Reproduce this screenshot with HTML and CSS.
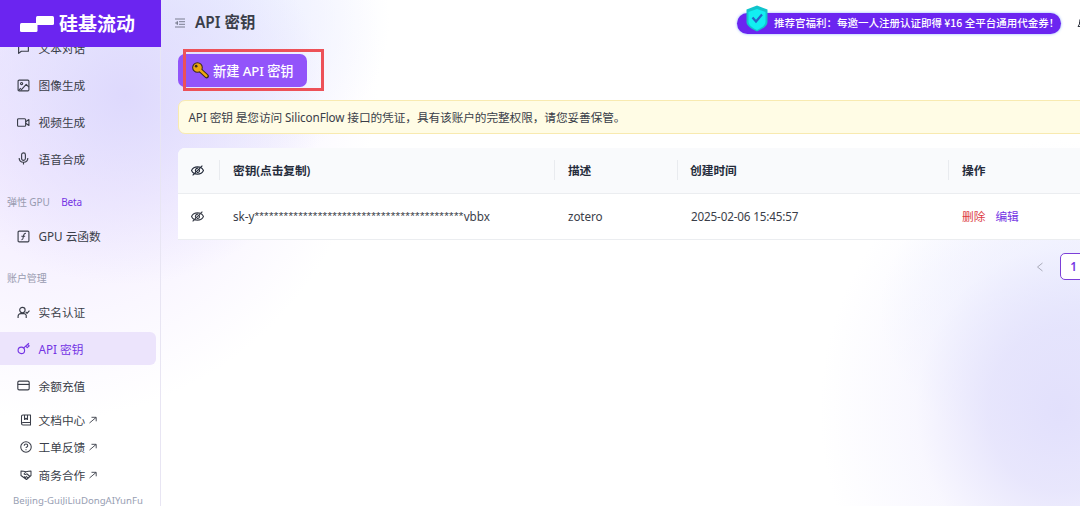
FILE: index.html
```html
<!doctype html>
<html lang="zh-CN">
<head>
  <meta charset="utf-8">
  <title>API 密钥</title>
  <link rel="stylesheet" href="styles.css">
</head>
<body>
  <div class="sidebar">
    <div class="logo">
      <svg width="35" height="18" viewBox="0 0 35 18" fill="#fff">
        <rect x="0" y="8" width="17.500" height="9" rx="1.500"/>
        <rect x="16" y="1" width="18" height="9" rx="1.500"/>
      </svg>
      <span>硅基流动</span>
    </div>
    <div class="nav">
      <a class="item">
        <svg class="icon" viewBox="0 0 24 24"><path d="M3 3h18v14H8l-5 4z"/></svg>
        文本对话
      </a>
      <a class="item">
        <svg class="icon" viewBox="0 0 24 24"><rect x="2" y="2" width="20" height="20" rx="2"/><circle cx="8.5" cy="8.5" r="2"/><path d="M22 15l-5-5L7 21M7 17l-4 4"/></svg>
        图像生成
      </a>
      <a class="item">
        <svg class="icon" viewBox="0 0 24 24"><rect x="1" y="5" width="15" height="14" rx="2"/><path d="M16 10.500l6-4v11l-6-4"/></svg>
        视频生成
      </a>
      <a class="item">
        <svg class="icon" viewBox="0 0 24 24"><rect x="8.5" y="1.5" width="7" height="14" rx="3.5"/><path d="M4 11c0 10.500 16 10.500 16 0M12 19v4"/></svg>
        语音合成
      </a>
      <div class="group">弹性 GPU <span class="beta">Beta</span></div>
      <a class="item">
        <svg class="icon" viewBox="0 0 24 24"><rect x="2" y="2" width="20" height="20" rx="2"/><path d="M8 18c3 0 3-1 3.500-5s1-7 5-7M8 11.500h7"/></svg>
        GPU 云函数
      </a>
      <div class="group account">账户管理</div>
      <a class="item">
        <svg class="icon" viewBox="0 0 24 24"><circle cx="10" cy="7.500" r="5"/><path d="M2 22v-3c0-3 2-5 5-5h6c2 0 3 1 4 3v5M16 11l2.500 2.500L23 8.500"/></svg>
        实名认证
      </a>
      <a class="item active">
        <svg class="icon" viewBox="0 0 24 24"><circle cx="8" cy="15.500" r="6"/><path d="M12.500 11L22 2M16 7.500l3 3 3.500-3.500-3-3"/></svg>
        API 密钥
      </a>
      <a class="item">
        <svg class="icon" viewBox="0 0 24 24"><rect x="1.500" y="4" width="21" height="16" rx="2.500"/><path d="M1.500 10h21"/></svg>
        余额充值
      </a>
    </div>
    <div class="links">
      <a class="link">
        <svg class="icon" viewBox="0 0 24 24"><path d="M21 17V2H6C4 2 3 3 3 5v14c0 2 1 3 3 3h15v-5H6c-2 0-3 1-3 2.500M9 2v9l3-2.500 3 2.500V2"/></svg>
        文档中心
        <svg class="arrow" viewBox="0 0 8 8"><path d="M0.500 7L7 1.500M2.500 1.300h4.700v4"/></svg>
      </a>
      <a class="link">
        <svg class="icon" viewBox="0 0 24 24"><circle cx="12" cy="12" r="10.500"/><path d="M8.500 9.500c0-4.500 7-4.500 7 0 0 2.500-3.500 2.500-3.500 4.500M12 16.500v2"/></svg>
        工单反馈
        <svg class="arrow" viewBox="0 0 8 8"><path d="M0.500 7L7 1.500M2.500 1.300h4.700v4"/></svg>
      </a>
      <a class="link">
        <svg class="icon" viewBox="0 0 24 24"><path d="M2 4l5 .5 5 1 5-1L22 4v9l-9 8-11-8zM12 5.500L8 10c2 2 4 1 5.500-.500L20 15M12 14l4 4M8.500 15l4 3.500"/></svg>
        商务合作
        <svg class="arrow" viewBox="0 0 8 8"><path d="M0.500 7L7 1.500M2.500 1.300h4.700v4"/></svg>
      </a>
    </div>
    <div class="user">Beijing-GuiJiLiuDongAIYunFu</div>
  </div>

  <div class="main">
    <div class="topbar">
      <svg class="fold" viewBox="0 0 10 10"><path d="M0 1h10M4 3.700h6M4 6.300h6M0 9h10"/><path d="M2.500 3.500L0.500 5l2 1.500z"/></svg>
      <h1>API 密钥</h1>
      <div class="banner">
        <svg class="shield" width="24" height="27" viewBox="0 0 24 27">
          <path d="M12 .5L22.500 4.500V17c0 4-5 7-10.500 9.500C6.500 24 1.500 21 1.500 17V4.500z" fill="#10c4cc"/>
          <path d="M12 4l8.500 3v9.500c0 4-4.500 6.500-8.500 8.500-4-2-8.500-4.500-8.500-8.500V7z" fill="#12eef2"/>
          <path d="M7.500 12.500l3.500 4 6-7" fill="none" stroke="#2563c9" stroke-width="2.200"/>
        </svg>
        推荐官福利：每邀一人注册认证即得 ¥16 全平台通用代金券！
      </div>
      <svg class="bell" viewBox="0 0 12 12"><path d="M1 9.500h10L9.500 7V4.500a3.500 3.500 0 0 0-7 0V7z"/></svg>
    </div>

    <div class="toolbar">
      <button class="create">
        <svg width="17" height="17" viewBox="0 0 18 18">
          <path d="M8 8l7.500 7" stroke="#3a2a20" stroke-width="4.600" stroke-linecap="round"/>
          <circle cx="5.800" cy="5.800" r="5.100" fill="#eda711" stroke="#3a2a20" stroke-width="1.100"/>
          <path d="M7.500 7.500l7.700 7.200" stroke="#eda711" stroke-width="2.700" stroke-linecap="round"/>
          <circle cx="4.400" cy="4.400" r="1.400" fill="#3a2a20"/>
        </svg>
        新建 API 密钥
      </button>
      <div class="mark"></div>
    </div>

    <div class="alert">API 密钥 是您访问 SiliconFlow 接口的凭证，具有该账户的完整权限，请您妥善保管。</div>

    <div class="table">
      <div class="row head">
        <div class="cell eye"><svg class="icon" viewBox="0 0 24 24"><path d="M1 12C5 3 19 3 23 12 19 21 5 21 1 12zM21 3L3 21M13 8c-4-1-6 4-4 6.500M15 10c2 4-1 6-4 5.500"/></svg></div>
        <div class="cell key">密钥(点击复制)</div>
        <div class="cell desc">描述</div>
        <div class="cell time">创建时间</div>
        <div class="cell action">操作</div>
      </div>
      <div class="row">
        <div class="cell eye"><svg class="icon" viewBox="0 0 24 24"><path d="M1 12C5 3 19 3 23 12 19 21 5 21 1 12zM21 3L3 21M13 8c-4-1-6 4-4 6.500M15 10c2 4-1 6-4 5.500"/></svg></div>
        <div class="cell key">sk-y<span class="stars">*******************************************</span>vbbx</div>
        <div class="cell desc">zotero</div>
        <div class="cell time">2025-02-06 15:45:57</div>
        <div class="cell action"><a class="delete">删除</a><a class="edit">编辑</a></div>
      </div>
    </div>

    <div class="pagination">
      <svg class="prev" viewBox="0 0 8 10"><path d="M6.500 1L1.500 5l5 4"/></svg>
      <div class="page">1</div>
    </div>
  </div>
</body>
</html>
```

FILE: styles.css
```css
* {
  box-sizing: border-box;
}

body {
  display: flex;
  margin: 0;
  height: 506px;
  overflow: hidden;
  font-family: "Noto Sans", "Noto Sans CJK SC", sans-serif;
  font-size: 11.7px;
  line-height: 18px;
  color: #3a3e49;
  background:
    radial-gradient(ellipse 240px 270px at 1060px 410px, rgba(226, 224, 252, 1) 0%, rgba(228, 226, 252, 0.85) 30%, rgba(240, 238, 254, 0.45) 60%, rgba(255, 255, 255, 0) 100%),
    radial-gradient(ellipse 200px 150px at 1080px 310px, rgba(228, 234, 255, 0.9) 0%, rgba(255, 255, 255, 0) 100%),
    radial-gradient(ellipse 200px 190px at 125px 95px, rgba(222, 217, 253, 1) 0%, rgba(226, 221, 253, 0.7) 40%, rgba(240, 236, 255, 0) 100%),
    radial-gradient(ellipse 220px 170px at 170px 20px, rgba(228, 234, 255, 1) 0%, rgba(234, 239, 255, 0.75) 45%, rgba(255, 255, 255, 0) 100%),
    radial-gradient(ellipse 330px 360px at 50px 60px, rgba(240, 230, 255, 1) 0%, rgba(243, 236, 255, 0.9) 40%, rgba(255, 255, 255, 0) 100%),
    #fff;
}

svg {
  flex: none;
}

.icon {
  width: 13px;
  height: 13px;
  fill: none;
  stroke: currentColor;
  stroke-width: 2.1;
  stroke-linejoin: round;
}

/* sidebar */

.sidebar {
  display: flex;
  flex-direction: column;
  flex: none;
  width: 161px;
  height: 506px;
  border-right: 1px solid #e8e5f3;
}

.logo {
  display: flex;
  align-items: center;
  gap: 4px;
  position: relative;
  flex: none;
  width: 161px;
  height: 47px;
  padding-left: 20px;
  background: #6b25f0;
  color: #fff;
  font-size: 19px;
  font-weight: 700;
}

.nav {
  display: flex;
  flex-direction: column;
  justify-content: flex-end;
  flex: none;
  height: 359px;
  overflow: hidden;
}

.item {
  display: flex;
  align-items: center;
  flex: none;
  gap: 9px;
  width: 156px;
  height: 33px;
  margin-bottom: 3.8px;
  padding-left: 16.500px;
  border-radius: 0 6px 6px 0;
  white-space: nowrap;
}

.item.active {
  background: #ece4fc;
  color: #7434e4;
}

.group {
  flex: none;
  height: 18px;
  margin: 13.500px 0 9.200px;
  padding-left: 7px;
  font-size: 10px;
  letter-spacing: -0.1px;
  color: #989bb0;
}

.group.account {
  margin: 12px 0 9px;
}

.beta {
  margin-left: 9px;
  color: #7434e4;
}

.links {
  display: flex;
  flex-direction: column;
  gap: 9.500px;
  padding: 4.500px 0 0 20px;
}

.link {
  display: flex;
  align-items: center;
  height: 18px;
}

.link .icon {
  width: 12px;
  height: 12px;
  margin-right: 6.500px;
}

.arrow {
  width: 8px;
  height: 8px;
  margin-left: 4px;
  fill: none;
  stroke: currentColor;
  stroke-width: 0.9;
}

.user {
  margin-top: 8px;
  padding-left: 13px;
  font-size: 9.6px;
  color: #979eb3;
  white-space: nowrap;
}

/* content */

.main {
  flex: 1;
  min-width: 0;
  padding-left: 17px;
  overflow: hidden;
}

.topbar {
  display: flex;
  align-items: center;
  width: 920px;
  height: 46px;
  margin-left: -3px;
}

.fold {
  width: 10px;
  height: 10px;
  fill: none;
  stroke: #6e7385;
  stroke-width: 0.9;
}

h1 {
  margin: 0 auto 0 10px;
  font-size: 15.4px;
  font-weight: 600;
}

.banner {
  position: relative;
  width: 324px;
  height: 21px;
  margin-right: 16px;
  padding-left: 37px;
  border-radius: 11px;
  background: #6b25f0;
  box-shadow: 0 0 3px #8fb0ff;
  color: #fff;
  font-family: "Noto Sans CJK SC", sans-serif;
  font-size: 10.5px;
  font-weight: 500;
  line-height: 20px;
  white-space: nowrap;
}

.shield {
  position: absolute;
  left: 8px;
  top: -8px;
}

.bell {
  width: 12px;
  height: 12px;
  margin-right: 6px;
  fill: none;
  stroke: #30343f;
}

.toolbar {
  position: relative;
  padding-top: 8px;
}

.create {
  display: flex;
  align-items: center;
  gap: 4px;
  width: 129px;
  height: 33px;
  padding: 0 0 1px 14px;
  border: none;
  border-radius: 7px;
  background: #9254fa;
  color: #fff;
  font: 500 13.2px "Noto Sans", "Noto Sans CJK SC", sans-serif;
  letter-spacing: -0.05px;
  white-space: nowrap;
}

/* highlight frame over the button */
.mark {
  position: absolute;
  left: 5px;
  top: 3px;
  width: 141px;
  height: 42px;
  border: 3px solid #ed5158;
}

.alert {
  width: 920px;
  height: 34px;
  margin-top: 13px;
  padding-left: 9.500px;
  border: 1px solid #f8eab0;
  border-radius: 7px;
  background: #fffce5;
  letter-spacing: -0.1px;
  line-height: 32px;
  white-space: nowrap;
}

.table {
  width: 920px;
  margin-top: 14px;
  border-radius: 7px 7px 0 0;
  background: #fff;
  overflow: hidden;
}

.row {
  display: flex;
  align-items: center;
  height: 46px;
  padding-bottom: 2px;
  border-bottom: 1px solid #ebedf0;
}

.head {
  background: #f9fafc;
  color: #252c3b;
  font-weight: 600;
}

.cell {
  display: flex;
  align-items: center;
  flex: none;
  height: 20px;
  padding-left: 13px;
  white-space: nowrap;
}

.head .cell + .cell {
  border-left: 1px solid #e9ebef;
}

.row:not(.head) .cell + .cell {
  padding-left: 14px;
}

.cell.eye {
  width: 41px;
  padding: 1px 0 0 12.500px;
}

.key {
  width: 335px;
  letter-spacing: -0.05px;
}

.desc {
  width: 123px;
  letter-spacing: -0.1px;
}

.head .time {
  padding-left: 12px;
}

.time {
  width: 271px;
}

.row:not(.head) .time {
  padding-left: 13px;
  letter-spacing: -0.17px;
}

.action {
  gap: 10px;
}

.stars {
  font-family: "Liberation Sans", sans-serif;
  letter-spacing: 0.32px;
}

.delete {
  color: #dc3c43;
}

.edit {
  color: #7434e4;
}

.pagination {
  display: flex;
  align-items: center;
  gap: 16px;
  margin-top: 13px;
  padding-left: 858px;
}

.prev {
  width: 8px;
  height: 10px;
  fill: none;
  stroke: #a9abb9;
}

.page {
  flex: none;
  width: 27px;
  height: 27px;
  border: 1px solid #7c3fd8;
  border-radius: 5px;
  background: #fff;
  color: #7434e4;
  font-weight: 600;
  line-height: 25px;
  text-align: center;
}
```
